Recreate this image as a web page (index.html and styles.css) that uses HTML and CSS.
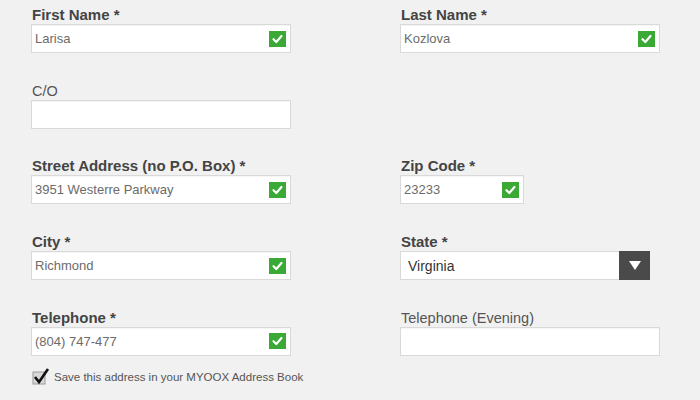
FILE: index.html
```html
<!DOCTYPE html>
<html lang="en">
<head>
    <meta charset="UTF-8">
    <title>Shipping Address</title>
    <link rel="stylesheet" href="styles.css">
</head>
<body>

<form class="address-form">
    <div class="field">
        <label class="req">First Name *</label>
        <div class="box">
            <input type="text" value="Larisa">
            <span class="ok"><svg viewBox="0 0 17 16"><path d="M4.5 8.2 L7.3 11 L12.5 5" /></svg></span>
        </div>
    </div>
    <div class="field">
        <label class="req">Last Name *</label>
        <div class="box">
            <input type="text" value="Kozlova">
            <span class="ok"><svg viewBox="0 0 17 16"><path d="M4.5 8.2 L7.3 11 L12.5 5" /></svg></span>
        </div>
    </div>

    <div class="field">
        <label>C/O</label>
        <div class="box"><input type="text" value=""></div>
    </div>
    <div class="field"></div>

    <div class="field">
        <label class="req">Street Address (no P.O. Box) *</label>
        <div class="box">
            <input type="text" value="3951 Westerre Parkway">
            <span class="ok"><svg viewBox="0 0 17 16"><path d="M4.5 8.2 L7.3 11 L12.5 5" /></svg></span>
        </div>
    </div>
    <div class="field">
        <label class="req">Zip Code *</label>
        <div class="box short">
            <input type="text" value="23233">
            <span class="ok"><svg viewBox="0 0 17 16"><path d="M4.5 8.2 L7.3 11 L12.5 5" /></svg></span>
        </div>
    </div>

    <div class="field">
        <label class="req">City *</label>
        <div class="box">
            <input type="text" value="Richmond">
            <span class="ok"><svg viewBox="0 0 17 16"><path d="M4.5 8.2 L7.3 11 L12.5 5" /></svg></span>
        </div>
    </div>
    <div class="field">
        <label class="req">State *</label>
        <div class="select">
            <span class="select-value">Virginia</span>
            <span class="select-arrow"></span>
        </div>
    </div>

    <div class="field">
        <label class="req">Telephone *</label>
        <div class="box">
            <input type="text" value="(804) 747-477">
            <span class="ok"><svg viewBox="0 0 17 16"><path d="M4.5 8.2 L7.3 11 L12.5 5" /></svg></span>
        </div>
    </div>
    <div class="field">
        <label>Telephone (Evening)</label>
        <div class="box"><input type="text" value=""></div>
    </div>
</form>

<div class="save-row">
    <span class="tick">
        <svg viewBox="0 0 20 18"><rect x="1" y="4" width="12" height="12" fill="#d8d8d8" stroke="#9a9a9a"/><path d="M3 9 L7 14 L16 1" fill="none" stroke="#111" stroke-width="2.6"/></svg>
    </span>
    <span>Save this address in your MYOOX Address Book</span>
</div>

</body>
</html>
```

FILE: styles.css
```css
body { margin: 0; background: #f1f1f1; font-family: "Liberation Sans", Arial, sans-serif; color: #555; }

.address-form { display: grid; grid-template-columns: 369px 260px; row-gap: 28.7px; padding: 6px 0 0 31px; }
.field label { display: block; padding-left: 1px; font-size: 14.5px; line-height: 18px; color: #555; }
.field label.req { font-size: 15px; font-weight: bold; color: #444; }

.box { display: flex; align-items: center; width: 258px; height: 27px; background: #fff; border: 1px solid #d9d9d9; box-shadow: inset 0 1px 1px rgba(0,0,0,0.04); }
.box.short { width: 122px; }
.box input { flex: 1; min-width: 0; border: none; outline: none; background: transparent; padding: 0 0 0 3px; font-family: inherit; font-size: 13px; color: #6b6b6b; }
.ok { width: 17px; height: 16px; margin-right: 4px; background: #3aa935; display: flex; }
.ok svg { width: 17px; height: 16px; }
.ok path { fill: none; stroke: #fff; stroke-width: 2.2; stroke-linecap: round; stroke-linejoin: round; }

.select { display: flex; align-items: center; width: 248px; height: 27px; background: #fff; border: 1px solid #d9d9d9; }
.select-value { flex: 1; padding-left: 7px; font-size: 14px; color: #333; }
.select-arrow { width: 31px; height: 29px; margin-right: -1px; background: #4a4a4a; display: flex; align-items: center; justify-content: center; }
.select-arrow::after { content: ""; border-left: 6px solid transparent; border-right: 6px solid transparent; border-top: 9px solid #fff; }

.save-row { display: flex; align-items: center; gap: 2px; padding: 12px 0 0 32px; font-size: 11.5px; color: #555; }
.tick svg { width: 20px; height: 18px; display: block; }
```
